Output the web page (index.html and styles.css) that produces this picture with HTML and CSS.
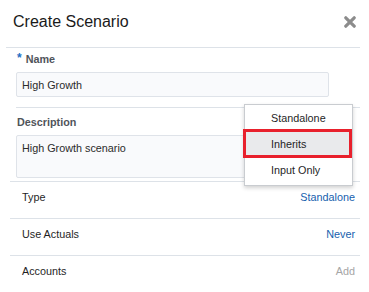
FILE: index.html
```html
<!DOCTYPE html>
<html lang="en">
<head>
<meta charset="utf-8">
<title>Create Scenario</title>
<link rel="stylesheet" href="styles.css">
</head>
<body>
<div class="dialog">
  <header class="head">
    <h1 class="title">Create Scenario</h1>
    <button class="close" type="button" aria-label="Close">
      <svg width="12" height="12" viewBox="0 0 12 12"><path d="M1.8 1.8 L10.2 10.2 M10.2 1.8 L1.8 10.2" stroke="#8c8c8c" stroke-width="3.2" stroke-linecap="round"/></svg>
    </button>
  </header>

  <section class="field field-name">
    <label class="label"><span class="req">*</span>Name</label>
    <div class="input">High Growth</div>
  </section>

  <section class="field field-desc">
    <label class="label">Description</label>
    <div class="textarea">High Growth scenario</div>
  </section>

  <div class="rows">
    <div class="row"><span class="row-name">Type</span><span class="row-value link">Standalone</span></div>
    <div class="row"><span class="row-name">Use Actuals</span><span class="row-value link">Never</span></div>
    <div class="row"><span class="row-name">Accounts</span><span class="row-value muted">Add</span></div>
  </div>

  <ul class="menu">
    <li class="menu-item">Standalone</li>
    <li class="menu-item selected">Inherits</li>
    <li class="menu-item">Input Only</li>
  </ul>
</div>
</body>
</html>
```

FILE: styles.css
```css
* { box-sizing: border-box; }
html, body { margin: 0; padding: 0; background: #fff; }
body { font-family: "Liberation Sans", Arial, sans-serif; color: #333; }

.dialog {
  position: relative;
  width: 369px;
  height: 292px;
  overflow: hidden;
  background: #fff;
}

.head {
  display: flex;
  justify-content: space-between;
  align-items: flex-start;
  height: 48px;
  margin: 0 9px 0 6px;
  padding: 13px 4px 0 7px;
  border-bottom: 1px solid #dde2e8;
}
.title {
  margin: 0;
  font-size: 16px;
  line-height: 18px;
  font-weight: normal;
  color: #1a1a1a;
}
.close {
  margin: 3px 0 0 0;
  padding: 0;
  border: 0;
  background: none;
  width: 12px;
  height: 12px;
  display: block;
}
.close svg { display: block; }

.field { margin: 0 9px 0 16px; }
.field-name { padding: 5px 0 10px; border-bottom: 1px solid #dde2e8; }
.field-desc { padding: 8px 0 3px; }

.label {
  display: block;
  padding-left: 1px;
  font-size: 10.8px;
  line-height: 13px;
  font-weight: bold;
  color: #50545a;
}
.req {
  color: #1f6fc4;
  font-weight: bold;
  font-size: 12px;
  margin-right: 4px;
  position: relative;
  top: -1px;
}

.input, .textarea {
  width: 313px;
  margin-top: 6px;
  border: 1px solid #dfe3e9;
  border-radius: 2px;
  background: #f9fafc;
  font-size: 10.8px;
  color: #2b2b2b;
  padding-left: 5px;
}
.input { height: 25px; line-height: 24px; }
.textarea { height: 43px; line-height: 13px; padding-top: 6px; }

.rows { margin: 0 9px 0 10px; }
.row {
  display: flex;
  justify-content: space-between;
  height: 37px;
  padding: 8px 5px 0 12px;
  border-top: 1px solid #dde2e8;
  font-size: 10.8px;
  line-height: 14px;
}
.row-name { color: #1f1f1f; }
.link { color: #175fae; }
.muted { color: #a6a6a6; }

.menu {
  position: absolute;
  left: 244px;
  top: 104px;
  width: 109px;
  margin: 0;
  padding: 0 0 2px;
  list-style: none;
  background: #fff;
  border: 1px solid #c9ccd0;
  box-shadow: 0 2px 4px rgba(0,0,0,0.18);
}
.menu-item {
  position: relative;
  height: 26px;
  line-height: 26px;
  padding-left: 26px;
  font-size: 10.8px;
  color: #1f1f1f;
}
.menu-item.selected { background: #e9eaec; }
.menu-item.selected::after {
  content: "";
  position: absolute;
  top: -2px;
  bottom: -1px;
  left: -2px;
  right: 0;
  border: 3px solid #e8202c;
}
```
